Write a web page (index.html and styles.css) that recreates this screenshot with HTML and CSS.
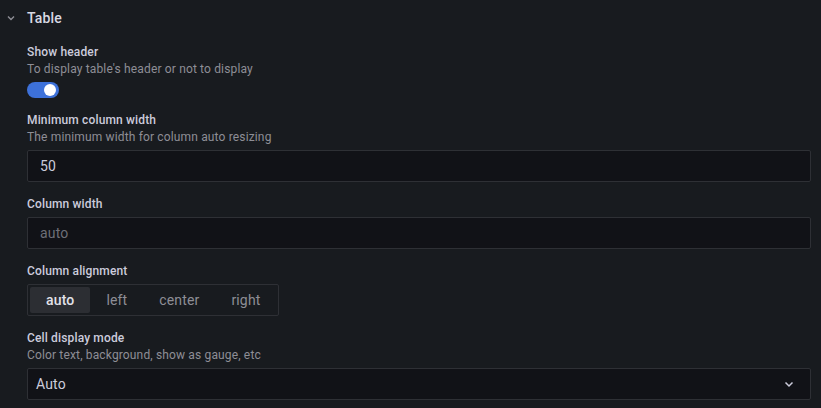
FILE: index.html
```html
<!DOCTYPE html>
<html>
<head>
<meta charset="utf-8">
<link rel="stylesheet" href="styles.css">
</head>
<body>
<div class="pane">
  <div class="section-header">
    <svg class="chev" width="12" height="12" viewBox="0 0 12 12"><path d="M3 4.5 L6 7.5 L9 4.5" fill="none" stroke="#8e8e96" stroke-width="1.4"/></svg>
    <span class="section-title">Table</span>
  </div>
  <div class="fields">
    <div class="field">
      <div class="label">Show header</div>
      <div class="desc">To display table's header or not to display</div>
      <div class="switch"><span class="knob"></span></div>
    </div>
    <div class="field">
      <div class="label">Minimum column width</div>
      <div class="desc">The minimum width for column auto resizing</div>
      <div class="input"><span class="value">50</span></div>
    </div>
    <div class="field">
      <div class="label">Column width</div>
      <div class="input"><span class="placeholder">auto</span></div>
    </div>
    <div class="field">
      <div class="label">Column alignment</div>
      <div class="radio">
        <span class="opt active">auto</span>
        <span class="opt">left</span>
        <span class="opt">center</span>
        <span class="opt">right</span>
      </div>
    </div>
    <div class="field">
      <div class="label">Cell display mode</div>
      <div class="desc">Color text, background, show as gauge, etc</div>
      <div class="input select"><span class="value">Auto</span>
        <svg width="12" height="12" viewBox="0 0 12 12"><path d="M2.5 4.5 L6 8 L9.5 4.5" fill="none" stroke="#ccccdc" stroke-width="1.5"/></svg>
      </div>
    </div>
  </div>
</div>
</body>
</html>
```
FILE: styles.css
```css
html, body {
  margin: 0;
  padding: 0;
  background: #181b1f;
}
body {
  font-family: Roboto, "Noto Sans", sans-serif;
  letter-spacing: 0.15px;
  color: #ccccdc;
  width: 821px;
  height: 408px;
  overflow: hidden;
}
.pane {
  padding: 0 10px 0 27px;
}
.section-header {
  height: 36px;
  display: flex;
  align-items: center;
  position: relative;
}
.chev {
  position: absolute;
  left: -22px;
  top: 12px;
}
.section-title {
  font-size: 14px;
  font-weight: 500;
  color: #d8d9e3;
}
.fields {
  padding-top: 8px;
  display: flex;
  flex-direction: column;
  gap: 14px;
}
.field {
  display: flex;
  flex-direction: column;
}
.label {
  font-size: 12px;
  font-weight: 500;
  line-height: 16px;
  color: #ccccdc;
}
.desc {
  font-size: 12px;
  line-height: 16px;
  margin-top: 1px;
  color: #8e8e96;
}
.switch {
  width: 32px;
  height: 16px;
  border-radius: 8px;
  background: #3d71d9;
  position: relative;
  margin-top: 5px;
}
.knob {
  position: absolute;
  right: 3px;
  top: 2px;
  width: 12px;
  height: 12px;
  border-radius: 50%;
  background: #ffffff;
}
.input {
  margin-top: 5px;
  height: 32px;
  box-sizing: border-box;
  background: #111217;
  border: 1px solid #2e3035;
  border-radius: 2px;
  display: flex;
  align-items: center;
  padding: 0 12px;
  font-size: 14px;
}
.value { color: #ccccdc; }
.placeholder { color: #6e6f78; }
.select {
  padding: 0 15px 0 8px;
  justify-content: space-between;
}
.radio {
  margin-top: 5px;
  align-self: flex-start;
  display: flex;
  padding: 2px;
  border: 1px solid #2e3035;
  border-radius: 2px;
  height: 32px;
  box-sizing: border-box;
}
.opt {
  padding: 0 16px;
  display: flex;
  align-items: center;
  font-size: 14px;
  color: #8e8e96;
  border-radius: 2px;
}
.opt.active {
  background: #2c2e33;
  color: #e2e2ea;
  font-weight: 500;
}
```
